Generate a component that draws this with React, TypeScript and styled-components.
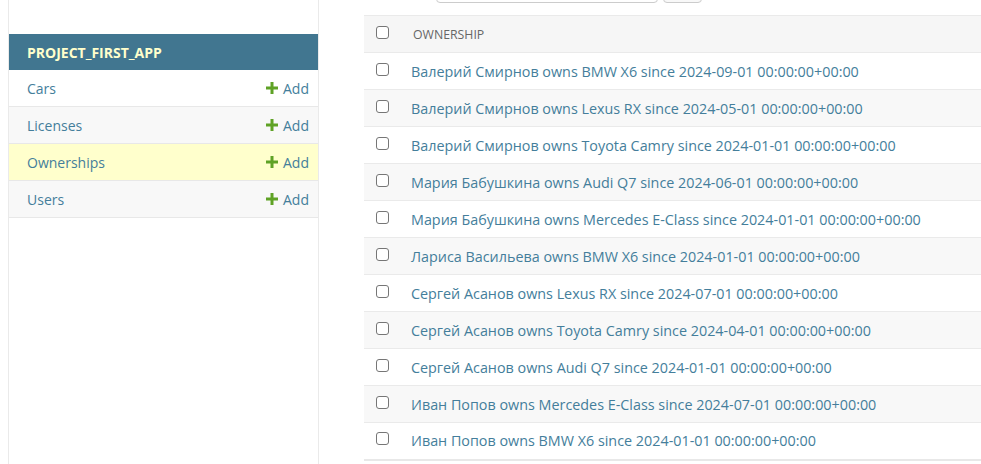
import React from "react";
import styled, { createGlobalStyle } from "styled-components";

const Global = createGlobalStyle`
  html, body { margin: 0; padding: 0; background: #fff; overflow: hidden; }
  body { font-family: "Open Sans", "Noto Sans", "Liberation Sans", sans-serif; color: #333; }
`;

const Page = styled.div`
  display: flex;
  width: 981px;
  height: 464px;
  overflow: hidden;
`;

const Sidebar = styled.nav`
  flex: 0 0 309px;
  margin-left: 8px;
  border-left: 1px solid #eaeaea;
  border-right: 1px solid #eaeaea;
  padding-top: 34px;
`;

const Caption = styled.div`
  height: 36px;
  background: #417690;
  display: flex;
  align-items: center;
  padding-left: 18px;
  font-size: 14px;
  font-weight: 700;
  color: #ffffcc;
`;

const NavRow = styled.div<{ $bg: string }>`
  height: 36px;
  display: flex;
  align-items: center;
  justify-content: space-between;
  padding: 0 9px 0 18px;
  background: ${(p) => p.$bg};
  border-bottom: 1px solid #e8e8e8;
  font-size: 14px;
`;

const NavLink = styled.span`
  color: #447e9b;
`;

const AddLink = styled.span`
  display: flex;
  align-items: center;
  gap: 5px;
  color: #447e9b;
`;

const Main = styled.main`
  flex: 1;
  padding-left: 45px;
  min-width: 0;
`;

const Toolbar = styled.div`
  display: flex;
  gap: 5px;
  margin-top: -28px;
  padding-left: 72px;
  height: 31px;
`;

const SearchInput = styled.div`
  width: 220px;
  height: 29px;
  border: 1px solid #ccc;
  border-radius: 4px;
  background: #fff;
`;

const SearchButton = styled.div`
  width: 37px;
  height: 29px;
  border: 1px solid #ccc;
  border-radius: 4px;
  background: #f8f8f8;
`;

const Table = styled.table`
  margin-top: 12px;
  width: 100%;
  border-collapse: collapse;
  border-top: 1px solid #eaeaea;
  border-bottom: 2px solid #e8e8e8;
`;

const HeadCell = styled.th<{ $check?: boolean }>`
  background: #f6f6f6;
  height: 37px;
  box-sizing: border-box;
  padding: 0 0 0 ${(p) => (p.$check ? "8px" : "10px")};
  width: ${(p) => (p.$check ? "39px" : "auto")};
  text-align: left;
  font-size: 12.3px;
  font-weight: 400;
  color: #666;
  text-transform: uppercase;
  border-bottom: 1px solid #eaeaea;
  vertical-align: middle;
`;

const Row = styled.tr<{ $alt: boolean }>`
  background: ${(p) => (p.$alt ? "#f8f8f8" : "#fff")};
`;

const Cell = styled.td<{ $check?: boolean }>`
  height: 37px;
  box-sizing: border-box;
  padding: 0 0 0 8px;
  width: ${(p) => (p.$check ? "39px" : "auto")};
  border-bottom: 1px solid #eaeaea;
  font-size: 14.35px;
  white-space: nowrap;
  vertical-align: middle;
`;

const Link = styled.span`
  color: #447e9b;
`;

const Check = styled.span`
  display: block;
  box-sizing: border-box;
  width: 13px;
  height: 13px;
  margin-left: 4px;
  border: 1px solid #767676;
  border-radius: 3px;
  background: #fff;
  position: relative;
  top: -2px;
`;

const Plus = () => (
  <svg width="12" height="12" viewBox="0 0 12 12">
    <path d="M4.5 0h3v4.5H12v3H7.5V12h-3V7.5H0v-3h4.5z" fill="#5fa225" />
  </svg>
);

const models = [
  { name: "Cars", bg: "#fff" },
  { name: "Licenses", bg: "#f8f8f8" },
  { name: "Ownerships", bg: "#ffffcc" },
  { name: "Users", bg: "#f8f8f8" },
];

const rows = [
  "Валерий Смирнов owns BMW X6 since 2024-09-01 00:00:00+00:00",
  "Валерий Смирнов owns Lexus RX since 2024-05-01 00:00:00+00:00",
  "Валерий Смирнов owns Toyota Camry since 2024-01-01 00:00:00+00:00",
  "Мария Бабушкина owns Audi Q7 since 2024-06-01 00:00:00+00:00",
  "Мария Бабушкина owns Mercedes E-Class since 2024-01-01 00:00:00+00:00",
  "Лариса Васильева owns BMW X6 since 2024-01-01 00:00:00+00:00",
  "Сергей Асанов owns Lexus RX since 2024-07-01 00:00:00+00:00",
  "Сергей Асанов owns Toyota Camry since 2024-04-01 00:00:00+00:00",
  "Сергей Асанов owns Audi Q7 since 2024-01-01 00:00:00+00:00",
  "Иван Попов owns Mercedes E-Class since 2024-07-01 00:00:00+00:00",
  "Иван Попов owns BMW X6 since 2024-01-01 00:00:00+00:00",
];

export default function App() {
  return (
    <>
      <Global />
      <Page>
        <Sidebar>
          <Caption>PROJECT_FIRST_APP</Caption>
          {models.map((m) => (
            <NavRow key={m.name} $bg={m.bg}>
              <NavLink>{m.name}</NavLink>
              <AddLink>
                <Plus />
                Add
              </AddLink>
            </NavRow>
          ))}
        </Sidebar>
        <Main>
          <Toolbar>
            <SearchInput />
            <SearchButton />
          </Toolbar>
          <Table>
            <thead>
              <tr>
                <HeadCell $check>
                  <Check />
                </HeadCell>
                <HeadCell>Ownership</HeadCell>
              </tr>
            </thead>
            <tbody>
              {rows.map((r, i) => (
                <Row key={r} $alt={i % 2 === 1}>
                  <Cell $check>
                    <Check />
                  </Cell>
                  <Cell>
                    <Link>{r}</Link>
                  </Cell>
                </Row>
              ))}
            </tbody>
          </Table>
        </Main>
      </Page>
    </>
  );
}
